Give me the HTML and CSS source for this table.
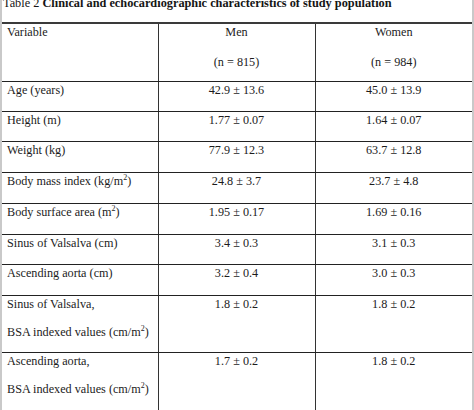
FILE: index.html
```html
<!DOCTYPE html>
<html>
<head>
<meta charset="utf-8">
<link rel="stylesheet" href="styles.css">
</head>
<body>
<div class="page">
  <div class="title"><span class="lbl">Table 2</span> <b>Clinical and echocardiographic characteristics of study population</b></div>
  <table class="tbl">
    <colgroup><col class="c1"><col class="c2"><col class="c3"></colgroup>
    <tr class="hd">
      <td><div class="ln">Variable</div></td>
      <td class="num"><div class="ln">Men</div><div class="ln">(n = 815)</div></td>
      <td class="num"><div class="ln">Women</div><div class="ln">(n = 984)</div></td>
    </tr>
    <tr class="r30">
      <td><div class="ln">Age (years)</div></td>
      <td class="num"><div class="ln">42.9 ± 13.6</div></td>
      <td class="num"><div class="ln">45.0 ± 13.9</div></td>
    </tr>
    <tr class="r30">
      <td><div class="ln">Height (m)</div></td>
      <td class="num"><div class="ln">1.77 ± 0.07</div></td>
      <td class="num"><div class="ln">1.64 ± 0.07</div></td>
    </tr>
    <tr class="r31">
      <td><div class="ln">Weight (kg)</div></td>
      <td class="num"><div class="ln">77.9 ± 12.3</div></td>
      <td class="num"><div class="ln">63.7 ± 12.8</div></td>
    </tr>
    <tr class="r31">
      <td><div class="ln">Body mass index (kg/m<sup>2</sup>)</div></td>
      <td class="num"><div class="ln">24.8 ± 3.7</div></td>
      <td class="num"><div class="ln">23.7 ± 4.8</div></td>
    </tr>
    <tr class="r31">
      <td><div class="ln">Body surface area (m<sup>2</sup>)</div></td>
      <td class="num"><div class="ln">1.95 ± 0.17</div></td>
      <td class="num"><div class="ln">1.69 ± 0.16</div></td>
    </tr>
    <tr class="r30">
      <td><div class="ln">Sinus of Valsalva (cm)</div></td>
      <td class="num"><div class="ln">3.4 ± 0.3</div></td>
      <td class="num"><div class="ln">3.1 ± 0.3</div></td>
    </tr>
    <tr class="r31">
      <td><div class="ln">Ascending aorta (cm)</div></td>
      <td class="num"><div class="ln">3.2 ± 0.4</div></td>
      <td class="num"><div class="ln">3.0 ± 0.3</div></td>
    </tr>
    <tr class="r57">
      <td><div class="ln">Sinus of Valsalva,</div><div class="ln">BSA indexed values (cm/m<sup>2</sup>)</div></td>
      <td class="num"><div class="ln">1.8 ± 0.2</div></td>
      <td class="num"><div class="ln">1.8 ± 0.2</div></td>
    </tr>
    <tr class="r62">
      <td><div class="ln">Ascending aorta,</div><div class="ln">BSA indexed values (cm/m<sup>2</sup>)</div></td>
      <td class="num"><div class="ln">1.7 ± 0.2</div></td>
      <td class="num"><div class="ln">1.8 ± 0.2</div></td>
    </tr>
  </table>
</div>
</body>
</html>
```
FILE: styles.css
```css
html, body {
  margin: 0;
  padding: 0;
  background: #ffffff;
}
.page {
  width: 474px;
  height: 410px;
  box-sizing: border-box;
  overflow: hidden;
  border-left: 2px solid #c9c9c9;
  border-right: 2px solid #c9c9c9;
  background: #ffffff;
  font-family: "Liberation Serif", "Times New Roman", serif;
  color: #1c1c1c;
}
.title {
  margin-top: -3px;
  height: 25px;
  padding-left: 1px;
  font-size: 12.3px;
  line-height: 12px;
  white-space: nowrap;
  color: #151515;
}
.title .lbl {
  font-weight: normal;
}
.title b {
  font-weight: bold;
}
.tbl {
  width: 470px;
  border-collapse: collapse;
  table-layout: fixed;
  font-size: 12.2px;
  border-top: 2px solid #3a3a3a;
}
.c1 { width: 156px; }
.c2 { width: 157px; }
.c3 { width: 157px; }
.tbl td {
  vertical-align: top;
  padding: 1px 5px 0;
  border-bottom: 1px solid #222222;
  border-left: 1px solid #333333;
}
.tbl td:first-child {
  border-left: none;
}
.tbl td.num {
  text-align: center;
}
.ln {
  line-height: 15px;
  white-space: nowrap;
}
.ln + .ln {
  margin-top: 13.5px;
}
.hd .ln + .ln {
  margin-top: 15px;
}
.hd { height: 58px; }
.r30 { height: 30px; }
.r31 { height: 31px; }
.r57 { height: 57px; }
.r62 { height: 62px; }
sup {
  font-size: 8px;
  line-height: 0;
  vertical-align: 5px;
}
```
